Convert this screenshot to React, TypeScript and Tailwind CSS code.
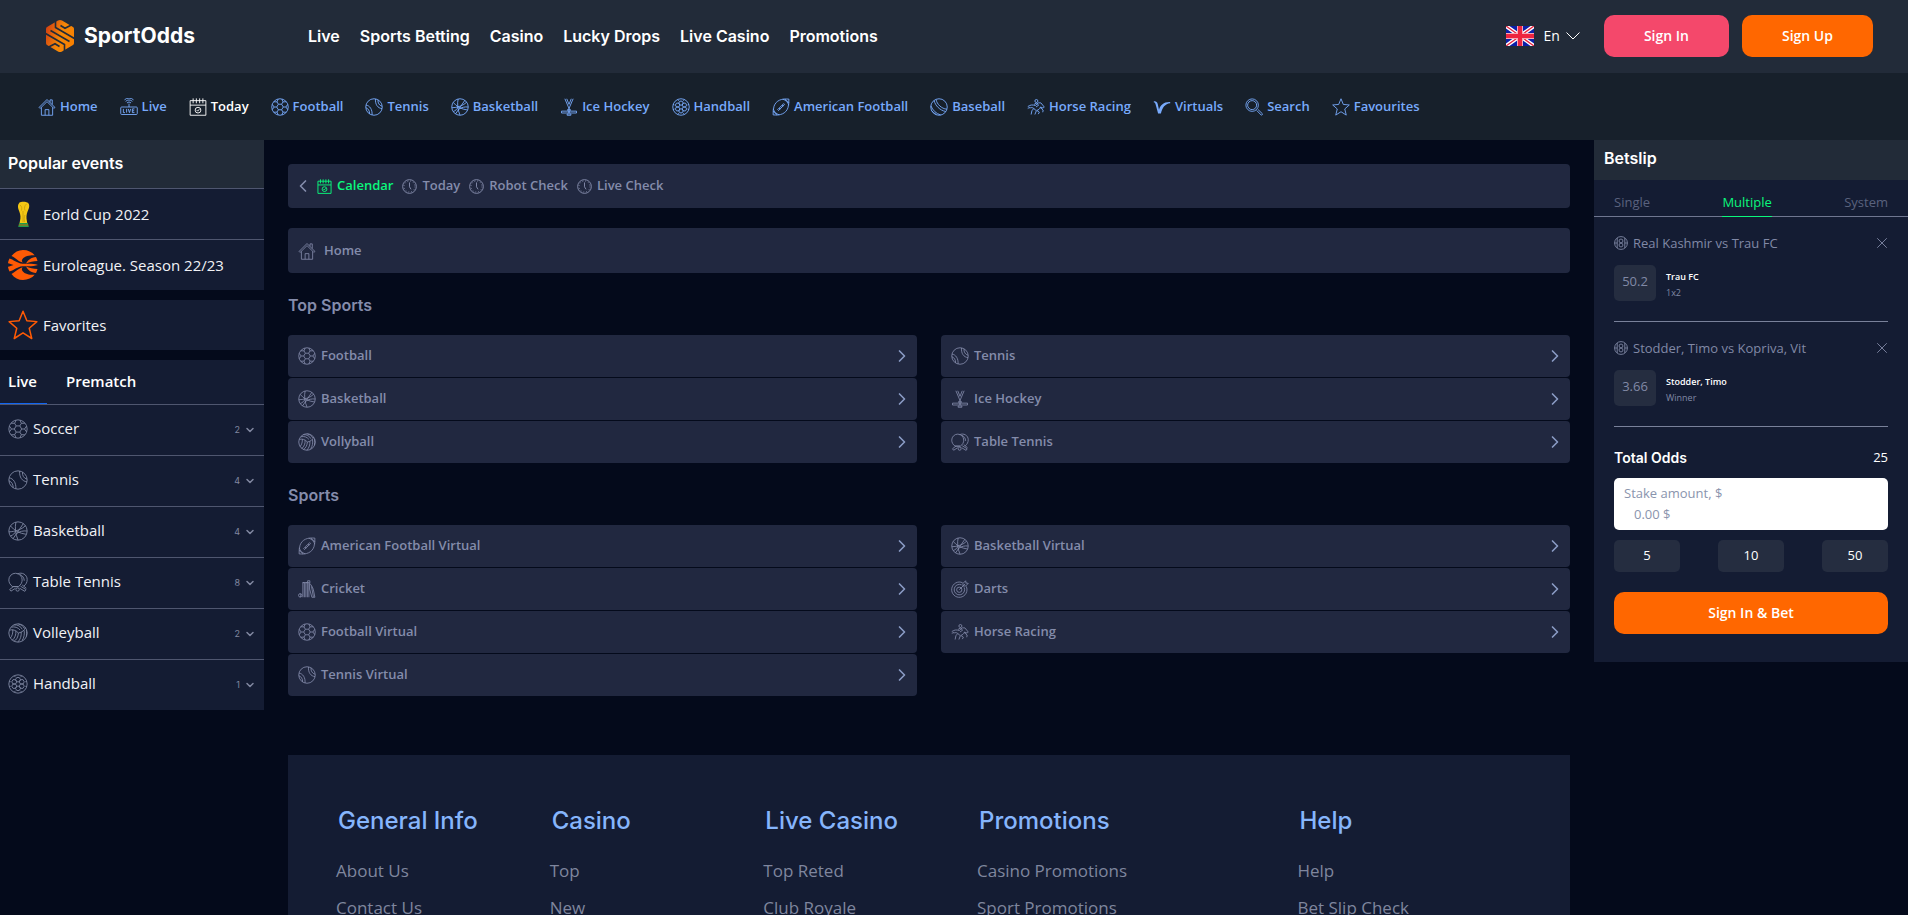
import React, { useState } from 'react';
import { ChevronDown, ChevronLeft, ChevronRight, X } from 'lucide-react';

/* ---------- Icons ---------- */

const hexagon = (cx: number, cy: number, r: number) => {
  const points = [0, 60, 120, 180, 240, 300].map((deg) => {
    const a = (deg * Math.PI) / 180;
    return `${(cx + r * Math.cos(a)).toFixed(2)} ${(cy + r * Math.sin(a)).toFixed(2)}`;
  });
  return `M${points.join('L')}Z`;
};

const handballCells = [30, 90, 150, 210, 270, 330]
  .map((deg) => {
    const a = (deg * Math.PI) / 180;
    return hexagon(12 + 5.2 * Math.cos(a), 12 + 5.2 * Math.sin(a), 3);
  })
  .join('');

const ICONS = {
  home: (
    <>
      <path d="M1.500 12.500 12 2l10.500 10.500-1.400 1.400L12 4.800 2.900 13.900Z" />
      <path d="M4.500 12.500V23h15V12.500M9.500 23v-7.500h5V23M16 5.800V2.500h3v6.200" />
    </>
  ),
  live: (
    <>
      <rect x="1" y="12" width="22" height="10" rx="1.200" />
      <path d="M12 12V7.500M7.500 4.500a6.400 6.400 0 0 1 9 0M9.300 6.600a3.800 3.800 0 0 1 5.400 0M6 2.400a9 9 0 0 1 12 0" />
      <path d="M4.500 14.500v5h2.200M8.800 14.500v5M11 14.500l1.600 5 1.600-5M19.300 14.500h-2.800v5h2.800M16.500 17h2.400" />
    </>
  ),
  calendar: (
    <>
      <path d="M1.500 3.500h21v19.500h-21ZM1.500 9.500h21" />
      <path d="M5.500 0.500v6.500M9.800 0.500v6.500M14.200 0.500v6.500M18.500 0.500v6.500" />
      <circle cx="12" cy="16.200" r="3.800" />
      <path d="m10.300 16.200 1.300 1.300 2.200-2.600" />
    </>
  ),
  soccer: (
    <>
      <circle cx="12" cy="12" r="11" />
      <path d="M9.800 8.300h4.400l2.200 3.700-2.200 3.700H9.800L7.600 12Z" />
      <path d="M9.800 8.300 8 5.200M14.200 8.300 16 5.200M16.400 12h3.400M14.200 15.700l1.800 3.100M9.800 15.700 8 18.800M7.600 12H4.200" />
      <path d="M9.500 1.400 8 5.200 3.700 5M14.500 1.400 16 5.200l4.300-.2M22.300 8.500 19.800 12l2.500 3.500M20.300 19l-4.300-.2-1.500 3.800M9.500 22.600 8 18.800 3.700 19M1.700 8.500 4.200 12l-2.500 3.500" />
    </>
  ),
  tennis: (
    <>
      <circle cx="12" cy="12" r="11" />
      <path d="M1.400 9.500c5 .5 8.600 6 8 13.200M1.200 13c3 .8 5.200 4.500 5 8.300M14 1.200c-.6 7.500 3 12.300 8.700 13M17.300 2.400c-.3 4.300 1.700 7.600 5.500 8.600" />
    </>
  ),
  basketball: (
    <>
      <circle cx="12" cy="12" r="11" />
      <path d="M18.500 3 6 21.300M3 6c4.500 5.500 11 9 19 10M9.500 1.300c-1.500 6-.5 15 2.500 21.500M1.100 13C8 13 17 10 21 5.500M11 14.800c3-2.300 7.300-3.300 11.800-2.800M3 18c3-1 5-3 6.500-6" />
    </>
  ),
  hockey: (
    <>
      <path d="m6.500 1 7 16.500H22V20h-9.800L10 15M17.500 1l-7 16.500H2V20h9.800l2.200-5M9 1l3 7.500L15 1" />
      <path d="M9.500 21.300v1.700h5v-1.700Z" />
    </>
  ),
  handball: (
    <>
      <circle cx="12" cy="12" r="11" />
      <path d={handballCells} />
      <path d="M8.800 3.800 7.500 2M15.200 3.800 16.500 2M20.800 9.300l1.900-.8M20.800 14.700l1.900.8M8.800 20.200 7.500 22M15.200 20.200l1.300 1.800M3.200 9.300l-1.900-.8M3.200 14.700l-1.900.8" />
    </>
  ),
  americanFootball: (
    <>
      <path d="M22.500 1.500C13 .5 5.500 3 2.700 11c-1 3.500-1.400 7.500-1.200 11.500C11 23.500 18.500 21 21.300 13c1-3.500 1.400-7.500 1.200-11.500Z" />
      <path d="M14.500 1.500c4 1.500 6.500 4 8 8M1.500 14.500c1.500 4 4 6.500 8 8M17.500 1.300l5.200 5.200M1.300 17.500l5.200 5.200M7.500 15.500l8-8 1.200 1.200-8 8ZM9.500 13.500l1.400 1.400M11.500 11.500l1.400 1.400M13.500 9.500l1.400 1.400" />
    </>
  ),
  baseball: (
    <>
      <circle cx="12" cy="12" r="11" />
      <path d="M5.500 3.500C7 10 13 16.500 21 18M8 2c1.500 6.500 7 12 14.500 13M1.200 10.500c2.500 6 7 10.300 13 12.200M2 16.500c1.800 2.300 4 4.200 6.500 5.500" />
    </>
  ),
  horse: (
    <>
      <circle cx="12.500" cy="4" r="2" />
      <path d="M1 11.500c3-2.500 6.500-2.700 10-1.500l4-3.500h3.500l4.500 5.500-1.500 1.500-3.500-1.500c-1 2.500-2.500 4-5 4.500l3.500 2.500-1.500 2.500" />
      <path d="M3.500 13.500c2-1 4-1 5.500.5L6.500 17l-1 5M9 14l3.500 3-2 5M9.500 8.500l3-1.800 3 2.800-3.500 2.500M17.500 12.500l4 3.500-.5 3M1 14l3-2" />
    </>
  ),
  virtuals: (
    <path
      d="M1 4.500c2.600-.7 4.600.8 5.300 3.500l1.700 7.500c2-6 6.500-10.500 15-10v1.500c-7 .3-10.500 6.300-12.500 13.500H6.800L3.500 8.500C3 6.800 2.300 6 1 5.800Z"
      fill="currentColor"
      stroke="none"
    />
  ),
  search: (
    <>
      <circle cx="9.500" cy="9.500" r="8.300" />
      <circle cx="9.500" cy="9.500" r="6" />
      <path d="m15.500 16.500 6 6.200c.9.600 2.300-.8 1.700-1.700l-6.200-6" />
    </>
  ),
  star: (
    <path
      d="m12 1 3.100 7.600 8 .7-6.100 5.300 2 8.200-7-4.500-7 4.500 2-8.200L.9 9.300l8-.7Z"
      strokeLinejoin="round"
    />
  ),
  clock: (
    <>
      <circle cx="12" cy="12" r="11" />
      <circle cx="12" cy="12" r="8.800" strokeDasharray="1.500 3.110" />
      <path d="M12 5.500v7l2.500 4" />
    </>
  ),
  volleyball: (
    <>
      <circle cx="12" cy="12" r="11" />
      <path d="M12.500 12C9.500 8.500 5.500 7.500 1.800 8.500M12.500 12c-.3 5-2.500 8.500-5.500 10M12.500 12c4.500-.8 7.500-3.500 8.500-6.500M4 5c4-1 8 .3 10.500 3.500M7 2.300c4.500-.5 8.500 1.700 10 5.200M12.500 1.200c3.500.8 6.200 2.800 7 5.300M15.800 10.800c.5 4.500-.9 9-4 12M19.300 8.700c.8 4.500 0 9-2.500 12.500M22 8c.6 3.300.5 6-.2 8.500M9.500 9.600c.3 4.300-1.200 8.500-4.500 11.200M5.700 8c.4 3.700-.6 7.500-2.900 10" />
    </>
  ),
  tableTennis: (
    <>
      <path d="M5.500 17.500C2.500 15.500 1 12.500 1 9.500a8 8 0 0 1 16 0c0 3-1.500 6-4.500 8ZM5.500 17.500h7" />
      <path d="M11.500 2.300C16.500-.3 23 3 23 9c0 3.500-1.500 6-4 8M14.500 3c3 1.300 5 4.300 5 7.500M6.500 17.500 2 21l1.500 2L9 19.500M15 17l6.500 4-1.300 2.200-6.200-3.700M17 15.500l5 4" />
      <circle cx="11.500" cy="21" r="2" />
    </>
  ),
  cricket: (
    <>
      <path d="M6.500 23V3.500h2V23M10.500 23V3.500h2V23M14.500 23V3.500M6 3.500h9.500M12.800 3.500V1h3v3" />
      <path d="M15.500 4.500c2 2 4 5 5 8.500L22.500 23h-4L15.500 12Z" />
      <path d="M18 8.500l2.500 14" />
      <circle cx="3" cy="20.500" r="2.300" />
      <path d="M3 18.200c.8 1.500.8 3 0 4.600" />
    </>
  ),
  darts: (
    <>
      <path d="M20.300 8.500A10.200 10.200 0 1 1 15.500 3.700" />
      <path d="M17.500 9.800A7 7 0 1 1 14.200 6.500" />
      <circle cx="11" cy="13" r="3.500" />
      <path d="M11 13 19 5M16 8V4.500L19.500 1 20 4l3 .5L19.500 8Z" />
    </>
  ),
  reel: (
    <>
      <circle cx="12" cy="12" r="11" />
      <circle cx="12" cy="8.500" r="3.300" />
      <circle cx="12" cy="15.500" r="3.300" />
      <path d="M5.500 3.500v17M18.500 3.500v17M1 12h4.500M18.500 12H23" />
    </>
  ),
};

type IconName = keyof typeof ICONS;

const Icon: React.FC<{ name: IconName; className?: string; stroke?: number }> = ({
  name,
  className = 'size-[18px]',
  stroke = 1.2,
}) => (
  <svg
    viewBox="0 0 24 24"
    fill="none"
    stroke="currentColor"
    strokeWidth={stroke}
    className={`flex-shrink-0 ${className}`}
    aria-hidden="true"
  >
    {ICONS[name]}
  </svg>
);

const LogoMark = () => (
  <svg viewBox="0 0 28 32" className="h-8 w-7" aria-hidden="true">
    <defs>
      <linearGradient id="logo" x1="0" y1="0.200" x2="1" y2="0.600">
        <stop offset="0" stopColor="#d23f12" />
        <stop offset="0.550" stopColor="#f38708" />
        <stop offset="1" stopColor="#f98000" />
      </linearGradient>
    </defs>
    <path fill="url(#logo)" d="M14 0q1 0 2 .6L27 7q1 .6 1 2v14q0 1.400-1 2l-11 6.400q-2 1.200-4 0L1 25q-1-.6-1-2V9q0-1.400 1-2L12 .6Q13 0 14 0Z" />
    <path
      fill="none"
      stroke="#222b39"
      strokeWidth="1.600"
      d="M9.500 0v7.500L28.500 18.500M-.5 13.500l19 11V32M14.500 5.500 19 8.300l9.500-5M4.500 10.500 14 16l9.500 5.500M13.500 26.500 9 23.700l-9.500 5"
    />
  </svg>
);

const UkFlag = () => (
  <svg viewBox="0 0 28 20" className="h-5 w-7" preserveAspectRatio="none" aria-hidden="true">
    <path fill="#0b1fa8" d="M0 0h28v20H0z" />
    <path stroke="#fff" strokeWidth="4" d="m0 0 28 20M28 0 0 20" />
    <path stroke="#e8223f" strokeWidth="1.300" d="m0 0 28 20M28 0 0 20" />
    <path stroke="#f4a9b8" strokeWidth="6" d="M14 0v20M0 10h28" />
    <path stroke="#ee2440" strokeWidth="4" d="M14 0v20M0 10h28" />
  </svg>
);

const TrophyIcon = () => (
  <svg viewBox="0 0 30 30" className="size-[30px]" aria-hidden="true">
    <path
      fill="#f3c614"
      d="M11.500 3.500C13 2.300 18 2.300 20 3.800c1.800 1.600 1.500 4.500.2 7.200-1.200 2.600-1.900 5.500-1.700 8.500l.8 5h-7.800l.9-5c.4-3-.6-5.800-1.700-8.500-1-2.700-1.200-5.500.8-7.500Z"
    />
    <path
      stroke="#c79c0a"
      fill="none"
      strokeWidth="0.800"
      d="M12 6c2 1.500 2 3.500 1.500 5.500M18.500 5c-2 1.500-2.500 4-1.500 6.500M15 12v11M17 16c-1 2-1 4-.5 7"
    />
    <path fill="#1f9a4c" d="M11 24h9v1.500h-9zM10.300 26.500h10.400V28H10.300z" />
    <path fill="#c9a616" d="M10.700 25.500h9.600v1H10.700z" />
  </svg>
);

const EuroleagueIcon = () => (
  <svg viewBox="0 0 30 30" className="size-[30px]" aria-hidden="true">
    <g fill="#fe5a05">
      <path d="M3.500 6C6.500 2 10.500 0 15 0c4.800 0 9 2 11.700 5.200-4.200-.2-9.700.3-12.200 3.800-.8 1.200-1 2.500.3 3.400C10.500 12 8 8 3.500 6Z" />
      <path d="M3.500 24C6.500 28 10.500 30 15 30c4.800 0 9-2 11.700-5.200-4.200.2-9.700-.3-12.200-3.800-.8-1.200-1-2.500.3-3.400C10.500 18 8 22 3.500 24Z" />
      <path d="M28 7c.7 1.200 1.200 2.500 1.500 4-4 .2-8 1-11.500 2.500C20 10 23 7.500 28 7Z" />
      <path d="M28 23c.7-1.200 1.200-2.500 1.500-4-4-.2-8-1-11.500-2.500C20 20 23 22.500 28 23Z" />
      <path d="M1.500 8.500c3.500.8 7.500 4.800 13 5.300 5 .3 10-.6 15.500 1.200-5.500 1.800-10.500.9-15.500 1.200-5.500.5-9.500 4.500-13 5.300C.5 19.500 0 17.500 0 16.800c1.500-.3 3.500-1 5.500-1.800C3.500 14.200 1.500 13.500 0 13.200c0-.7.500-2.700 1.500-4.700Z" />
    </g>
  </svg>
);

/* ---------- Data ---------- */

const mainNav = ['Live', 'Sports Betting', 'Casino', 'Lucky Drops', 'Live Casino', 'Promotions'];

const sportsNav: { label: string; icon: IconName }[] = [
  { label: 'Home', icon: 'home' },
  { label: 'Live', icon: 'live' },
  { label: 'Today', icon: 'calendar' },
  { label: 'Football', icon: 'soccer' },
  { label: 'Tennis', icon: 'tennis' },
  { label: 'Basketball', icon: 'basketball' },
  { label: 'Ice Hockey', icon: 'hockey' },
  { label: 'Handball', icon: 'handball' },
  { label: 'American Football', icon: 'americanFootball' },
  { label: 'Baseball', icon: 'baseball' },
  { label: 'Horse Racing', icon: 'horse' },
  { label: 'Virtuals', icon: 'virtuals' },
  { label: 'Search', icon: 'search' },
  { label: 'Favourites', icon: 'star' },
];

const sidebarSports: { label: string; icon: IconName; count: number }[] = [
  { label: 'Soccer', icon: 'soccer', count: 2 },
  { label: 'Tennis', icon: 'tennis', count: 4 },
  { label: 'Basketball', icon: 'basketball', count: 4 },
  { label: 'Table Tennis', icon: 'tableTennis', count: 8 },
  { label: 'Volleyball', icon: 'volleyball', count: 2 },
  { label: 'Handball', icon: 'handball', count: 1 },
];

const filters: { label: string; icon: IconName }[] = [
  { label: 'Calendar', icon: 'calendar' },
  { label: 'Today', icon: 'clock' },
  { label: 'Robot Check', icon: 'clock' },
  { label: 'Live Check', icon: 'clock' },
];

type Sport = { label: string; icon: IconName };

const topSports: Sport[][] = [
  [
    { label: 'Football', icon: 'soccer' },
    { label: 'Basketball', icon: 'basketball' },
    { label: 'Vollyball', icon: 'volleyball' },
  ],
  [
    { label: 'Tennis', icon: 'tennis' },
    { label: 'Ice Hockey', icon: 'hockey' },
    { label: 'Table Tennis', icon: 'tableTennis' },
  ],
];

const allSports: Sport[][] = [
  [
    { label: 'American Football Virtual', icon: 'americanFootball' },
    { label: 'Cricket', icon: 'cricket' },
    { label: 'Football Virtual', icon: 'soccer' },
    { label: 'Tennis Virtual', icon: 'tennis' },
  ],
  [
    { label: 'Basketball Virtual', icon: 'basketball' },
    { label: 'Darts', icon: 'darts' },
    { label: 'Horse Racing', icon: 'horse' },
  ],
];

const bets = [
  { match: 'Real Kashmir vs Trau FC', odds: '50.2', pick: 'Trau FC', market: '1x2' },
  { match: 'Stodder, Timo vs Kopriva, Vit', odds: '3.66', pick: 'Stodder, Timo', market: 'Winner' },
];

const footerColumns = [
  { title: 'General Info', links: ['About Us', 'Contact Us'], span: 'col-span-2' },
  { title: 'Casino', links: ['Top', 'New'], span: 'col-span-2' },
  { title: 'Live Casino', links: ['Top Reted', 'Club Royale'], span: 'col-span-2' },
  { title: 'Promotions', links: ['Casino Promotions', 'Sport Promotions'], span: 'col-span-3' },
  { title: 'Help', links: ['Help', 'Bet Slip Check'], span: 'col-span-3' },
];

/* ---------- Sections ---------- */

const Header = () => (
  <header className="flex items-center bg-[#222b39] pb-4 pl-[46px] pr-[35px] pt-[15px] font-['Inter',sans-serif] text-white">
    <a href="#" className="flex w-[262px] items-center gap-[10px]">
      <LogoMark />
      <span className="text-[21px] font-bold leading-8">SportOdds</span>
    </a>
    <nav className="flex flex-1 items-center gap-5 text-base font-semibold">
      {mainNav.map((item) => (
        <a key={item} href="#">
          {item}
        </a>
      ))}
    </nav>
    <button className="mr-6 flex items-center gap-[6px] font-['Open_Sans',sans-serif] text-sm">
      <UkFlag />
      <span className="pl-1">En</span>
      <svg viewBox="0 0 14 8" className="h-2 w-[14px]" fill="none" stroke="currentColor" aria-hidden="true">
        <path d="m0.500 0.500 6.500 6.500 6.500-6.500" />
      </svg>
    </button>
    <div className="flex gap-[13px] font-['Open_Sans',sans-serif] text-sm font-semibold">
      <button className="h-[42px] rounded-[10px] bg-[#f4486b] px-10">Sign In</button>
      <button className="h-[42px] rounded-[10px] bg-[#ff6700] px-10">Sign Up</button>
    </div>
  </header>
);

const SportsNav = () => {
  const [active, setActive] = useState('Today');

  return (
    <nav className="flex gap-[22px] bg-[#17202b] px-[38px] py-6 text-[13px] font-semibold">
      {sportsNav.map(({ label, icon }) => (
        <a
          key={label}
          href="#"
          onClick={() => setActive(label)}
          className={`flex items-center gap-1 whitespace-nowrap leading-[19px] ${
            active === label ? 'text-white' : 'text-[#78aafc]'
          }`}
        >
          <Icon name={icon} />
          {label}
        </a>
      ))}
    </nav>
  );
};

const Sidebar = () => {
  const [tab, setTab] = useState('Live');

  return (
    <aside className="w-[264px] flex-shrink-0 space-y-[10px] text-[15px] text-[#f1f2f6]">
      <section>
        <h2 className="border-b border-[#4f566f] bg-[#222b38] px-2 pb-[13px] pt-[11px] font-['Inter',sans-serif] text-base font-semibold text-white">
          Popular events
        </h2>
        <a href="#" className="flex items-center gap-[5px] border-b border-[#4f566f] bg-[#141c33] px-2 py-[10px]">
          <TrophyIcon />
          Eorld Cup 2022
        </a>
        <a href="#" className="flex items-center gap-[5px] bg-[#141c33] px-2 py-[10px]">
          <EuroleagueIcon />
          Euroleague. Season 22/23
        </a>
      </section>

      <a href="#" className="flex items-center gap-[5px] bg-[#141c33] px-2 py-[10px]">
        <Icon name="star" className="size-[30px] text-[#fe5a05]" />
        Favorites
      </a>

      <section className="bg-[#141c33]">
        <div className="flex border-b border-[#4f566f] font-semibold text-white">
          {['Live', 'Prematch'].map((item) => (
            <button
              key={item}
              onClick={() => setTab(item)}
              className={`mr-[11px] h-11 border-b px-2 pr-[10px] ${
                tab === item ? 'border-[#1266f1]' : 'border-transparent'
              }`}
            >
              {item}
            </button>
          ))}
        </div>
        <ul className="divide-y divide-[#4f566f]">
          {sidebarSports.map(({ label, icon, count }) => (
            <li key={label}>
              <button className="flex h-[50px] w-full items-center px-2 pb-[3px]">
                <Icon name={icon} className="size-5 text-[#7d86a0]" stroke={1.1} />
                <span className="pl-[5px]">{label}</span>
                <span className="ml-auto pr-1 pt-[3px] font-['Inter',sans-serif] text-[9px] text-[#8087a0]">
                  {count}
                </span>
                <ChevronDown className="mt-[3px] size-3 text-[#8087a0]" strokeWidth={3} />
              </button>
            </li>
          ))}
        </ul>
      </section>
    </aside>
  );
};

const SportList: React.FC<{ title: string; columns: Sport[][] }> = ({ title, columns }) => (
  <section>
    <h2 className="pb-[18px] pt-5 font-['Inter',sans-serif] text-base font-semibold">{title}</h2>
    <div className="grid grid-cols-2 items-start gap-6">
      {columns.map((column, i) => (
        <ul key={i} className="space-y-px">
          {column.map(({ label, icon }) => (
            <li key={label}>
              <a
                href="#"
                className="flex h-[42px] items-center gap-[5px] rounded bg-[#212840] px-[10px] text-[13px] font-semibold"
              >
                <Icon name={icon} stroke={1.1} />
                {label}
                <ChevronRight className="-mr-[5px] ml-auto size-5 text-[#8a9bc4]" />
              </a>
            </li>
          ))}
        </ul>
      ))}
    </div>
  </section>
);

const Footer = () => (
  <footer className="mt-[59px] grid grid-cols-12 bg-[#141c33]">
    {footerColumns.map(({ title, links, span }) => (
      <div key={title} className={`py-12 pl-12 ${span}`}>
        <h3 className="whitespace-nowrap pl-[2px] font-['Inter',sans-serif] text-2xl font-medium leading-9 text-[#86b5fc]">
          {title}
        </h3>
        <ul className="pt-[13px] text-[17px] leading-[37px] text-[#7f869e]">
          {links.map((link) => (
            <li key={link}>
              <a href="#">{link}</a>
            </li>
          ))}
        </ul>
      </div>
    ))}
  </footer>
);

const Betslip = () => {
  const [tab, setTab] = useState('Multiple');
  const [stake, setStake] = useState('');

  return (
    <aside className="w-[314px] flex-shrink-0 bg-[#141c33] pb-7 text-[13px] text-[#8189a6]">
      <h2 className="bg-[#222b38] px-[10px] pb-[10px] pt-[6px] font-['Inter',sans-serif] text-base font-semibold text-white">
        Betslip
      </h2>

      <div className="flex justify-between border-b border-[#6f7690] px-5 pt-3">
        {['Single', 'Multiple', 'System'].map((item) => (
          <button
            key={item}
            onClick={() => setTab(item)}
            className={`-mb-px border-b pb-1 leading-5 ${
              tab === item ? 'border-[#0bf77c] text-[#0bf77c]' : 'border-transparent text-[#5a627e]'
            }`}
          >
            {item}
          </button>
        ))}
      </div>

      <div className="px-5">
        {bets.map(({ match, odds, pick, market }) => (
          <article key={match} className="border-b border-[#79819a] pb-5 pt-4">
            <div className="flex items-center gap-[5px] leading-5">
              <Icon name="reel" className="size-[14px]" stroke={1.5} />
              {match}
              <button className="-mr-[3px] ml-auto" aria-label={`Remove ${match}`}>
                <X className="size-[18px]" strokeWidth={1.2} />
              </button>
            </div>
            <div className="flex gap-[10px] pt-3">
              <span className="h-9 w-[42px] rounded-[5px] bg-[#252d40] pt-[6px] text-center leading-5">{odds}</span>
              <div className="pt-1 text-[9px] leading-4">
                <p className="font-semibold text-white">{pick}</p>
                <p>{market}</p>
              </div>
            </div>
          </article>
        ))}

        <div className="flex items-center justify-between pb-[10px] pt-5 text-white">
          <span className="font-['Inter',sans-serif] text-sm font-semibold">Total Odds</span>
          <span className="leading-[21px]">25</span>
        </div>

        <label className="block rounded-[5px] bg-white px-[10px] py-[5px] leading-[21px] text-[#8a94ad]">
          Stake amount, $
          <input
            value={stake}
            onChange={(e) => setStake(e.target.value)}
            placeholder="0.00 $"
            className="block w-full bg-transparent px-[10px] outline-none placeholder:text-[#8a94ad]"
          />
        </label>

        <div className="flex justify-between py-[10px] text-white">
          {['5', '10', '50'].map((amount) => (
            <button key={amount} onClick={() => setStake(amount)} className="h-8 w-[66px] rounded-[5px] bg-[#252d40]">
              {amount}
            </button>
          ))}
        </div>

        <button className="mt-[10px] h-[42px] w-full rounded-[10px] bg-[#ff6700] text-sm font-semibold text-white">
          Sign In &amp; Bet
        </button>
      </div>
    </aside>
  );
};

const App: React.FC = () => {
  const [filter, setFilter] = useState('Calendar');

  return (
    <div className="min-h-screen bg-[#040a1b] font-['Open_Sans',sans-serif]">
      <Header />
      <SportsNav />

      <div className="flex items-start">
        <Sidebar />

        <main className="min-w-0 flex-1 px-6 pt-6 text-[#848cab]">
          <div className="flex h-11 items-center gap-[9px] rounded bg-[#212840] px-[10px] text-[13px] font-semibold">
            <button className="-mx-[5px]" aria-label="Back">
              <ChevronLeft className="size-5" />
            </button>
            {filters.map(({ label, icon }) => (
              <button
                key={label}
                onClick={() => setFilter(label)}
                className={`flex items-center gap-[5px] ${filter === label ? 'text-[#0bf77c]' : ''}`}
              >
                <Icon name={icon} className="size-[15px]" stroke={1.5} />
                {label}
              </button>
            ))}
          </div>

          <a
            href="#"
            className="mt-5 flex h-[45px] items-center gap-2 rounded bg-[#212840] px-[10px] text-[13px] font-semibold"
          >
            <Icon name="home" stroke={1.1} />
            Home
          </a>

          <SportList title="Top Sports" columns={topSports} />
          <SportList title="Sports" columns={allSports} />

          <Footer />
        </main>

        <Betslip />
      </div>
    </div>
  );
};

export default App;
